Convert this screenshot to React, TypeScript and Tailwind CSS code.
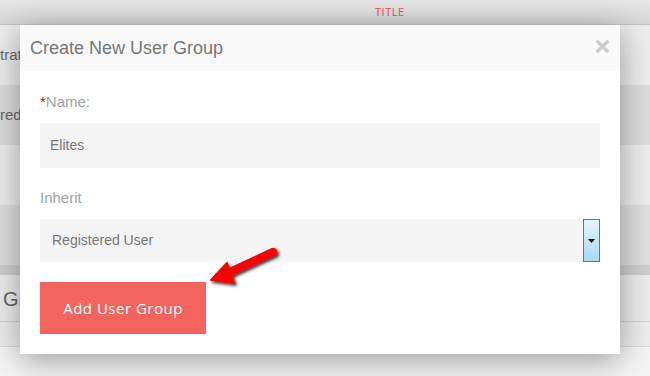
import React from 'react';

const BgRow: React.FC<{ className: string; children?: React.ReactNode }> = ({ className, children }) => (
    <div className={`flex items-center text-[#666] ${className}`}>{children}</div>
);

const App: React.FC = () => {
    return (
        <div className="relative w-[650px] h-[376px] overflow-hidden bg-[#f4f4f4] font-['Liberation_Sans',Arial,sans-serif]">
            {/* table behind the modal */}
            <div className="flex flex-col">
                <div className="h-[25px] bg-gradient-to-b from-[#e6e6e6] to-[#d6d6d6] border-b border-[#c4c4c4] flex items-center">
                    <span className="ml-[375px] text-[11px] tracking-[0.5px] text-[#e0525a] font-['Open_Sans',sans-serif]">TITLE</span>
                </div>
                <BgRow className="h-[60px] bg-[#ececec] text-[15px]">trat</BgRow>
                <BgRow className="h-[60px] bg-[#dcdcdc] text-[15px]">red</BgRow>
                <BgRow className="h-[60px] bg-[#ececec]" />
                <BgRow className="h-[60px] bg-[#dedede]" />
                <div className="h-[10px] bg-[#cdcdcd]" />
                <BgRow className="h-[47px] bg-[#ebebeb] text-[20px] pl-[3px] pt-[2px] border-b border-[#d2d2d2]">Gr</BgRow>
                <div className="h-[25px] bg-[#ececec] border-b border-[#dadada]" />
            </div>

            {/* modal */}
            <div className="absolute left-[20px] top-[25px] w-[600px] h-[329px] bg-white shadow-[0_6px_30px_rgba(0,0,0,0.36)] flex flex-col">
                <div className="h-[46px] bg-[#f9f9f9] flex items-center justify-between pl-[10px] pr-[11px]">
                    <h3 className="text-[18px] text-[#777]">Create New User Group</h3>
                    <svg width="13" height="13" viewBox="0 0 13 13" className="mt-[-3px]">
                        <path d="M2 2 L11 11 M11 2 L2 11" stroke="#cccccc" strokeWidth="3.4" strokeLinecap="square" />
                    </svg>
                </div>
                <div className="flex flex-col px-[20px] pt-[21px] pb-[20px]">
                    <label className="h-[20px] leading-[20px] text-[15px] text-[#a3a3a3]">
                        <span className="text-[#cc0000]">*</span>Name:
                    </label>
                    <div className="mt-[11px] h-[45px] bg-[#f4f4f4] flex items-center pl-[10px] text-[14px] text-[#777]">
                        Elites
                    </div>
                    <label className="mt-[20px] h-[20px] leading-[20px] text-[15px] text-[#a3a3a3]">Inherit</label>
                    <div className="mt-[11px] h-[43px] bg-[#f4f4f4] flex items-center justify-between pl-[12px] text-[14px] text-[#777]">
                        <span>Registered User</span>
                        <div className="w-[17px] h-[43px] border border-[#3c7fb1] bg-gradient-to-b from-[#e5f5fd] to-[#a7d9f5] flex items-center justify-center">
                            <svg width="7" height="4" viewBox="0 0 7 4">
                                <path d="M0 0 H7 L3.5 4 Z" fill="#000" />
                            </svg>
                        </div>
                    </div>
                    <div className="mt-[20px]">
                        <button className="w-[166px] h-[52px] bg-[#f3645f] text-white text-[15px] tracking-[0.5px] font-['Open_Sans',sans-serif]">
                            Add User Group
                        </button>
                    </div>
                </div>
            </div>

            {/* annotation arrow */}
            <svg className="absolute left-[200px] top-[240px]" width="90" height="55" viewBox="0 0 90 55">
                <defs>
                    <filter id="sh" x="-20%" y="-20%" width="150%" height="150%">
                        <feDropShadow dx="2" dy="2" stdDeviation="1.5" floodColor="#000" floodOpacity="0.75" />
                    </filter>
                </defs>
                <g filter="url(#sh)">
                    <line x1="73" y1="12" x2="28" y2="33" stroke="#ff0000" strokeWidth="8.5" strokeLinecap="round" />
                    <path d="M11 40 L27 23 L34 43 Z" fill="#ff0000" stroke="#ff0000" strokeWidth="2" strokeLinejoin="round" />
                </g>
            </svg>
        </div>
    );
};

export default App;
